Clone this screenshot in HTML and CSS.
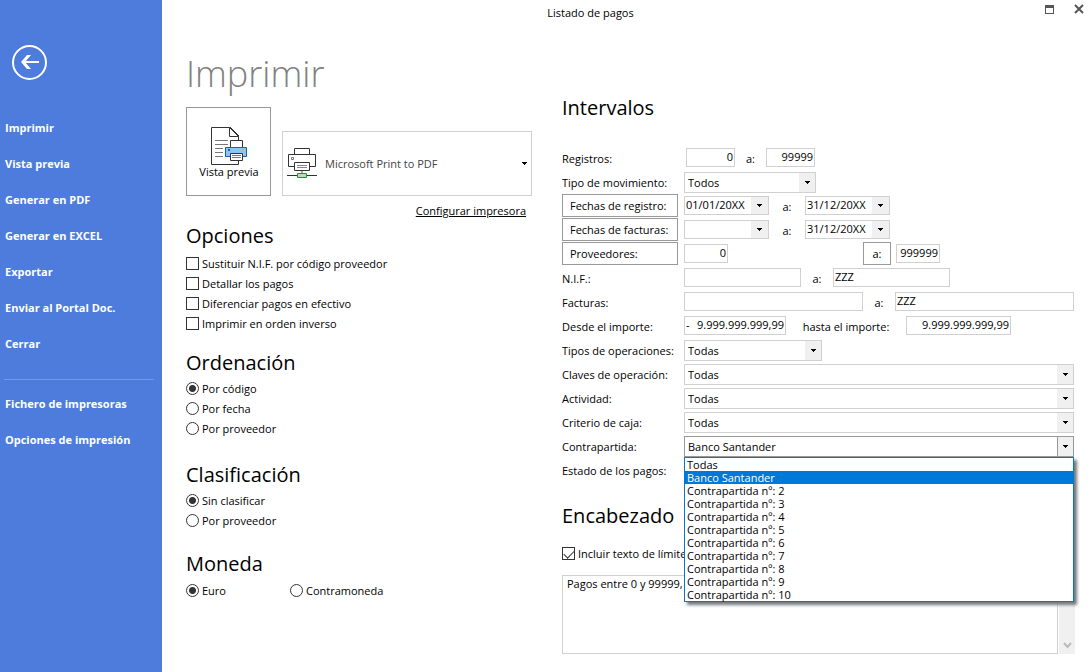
FILE: index.html
```html
<!DOCTYPE html>
<html lang="es">
<head>
<meta charset="utf-8">
<title>Listado de pagos</title>
<link rel="stylesheet" href="styles.css">
</head>
<body>
<svg class="defs" width="0" height="0" aria-hidden="true">
  <symbol id="arrow" viewBox="0 0 5 3"><path d="M0 0h5v1h-1v1h-1v1h-1v-1h-1v-1h-1z"/></symbol>
</svg>
<div class="app">
  <aside class="sidebar">
    <button class="back" type="button" aria-label="Volver">
      <svg width="35" height="35" viewBox="0 0 35 35" fill="none" stroke="#fff"><circle cx="17.500" cy="17.500" r="16.500" stroke-width="2"/><path d="M12 17h15" stroke-width="2"/><path d="M9 17l6-7h4l-6 7 6 7h-4z" fill="#fff" stroke="none"/></svg>
    </button>
    <nav class="menu">
      <a href="#">Imprimir</a>
      <a href="#">Vista previa</a>
      <a href="#">Generar en PDF</a>
      <a href="#">Generar en EXCEL</a>
      <a href="#">Exportar</a>
      <a href="#">Enviar al Portal Doc.</a>
      <a href="#">Cerrar</a>
    </nav>
    <hr class="divider">
    <nav class="menu">
      <a href="#">Fichero de impresoras</a>
      <a href="#">Opciones de impresión</a>
    </nav>
  </aside>

  <div class="main">
    <header class="titlebar">
      <span class="title">Listado de pagos</span>
      <div class="controls">
        <button type="button" aria-label="Maximizar"><svg width="9" height="10" viewBox="0 0 9 10"><path d="M0 1h9v9H0zM1 4v5h7V4z" fill="#555" fill-rule="evenodd"/></svg></button>
        <button type="button" aria-label="Cerrar"><svg width="10" height="10" viewBox="0 0 10 10"><path d="M1 1l8 8M9 1l-8 8" stroke="#555" stroke-width="2"/></svg></button>
      </div>
    </header>

    <div class="columns">
      <section class="left">
        <h1>Imprimir</h1>
        <div class="output">
          <button class="preview" type="button">
            <svg width="38" height="40" viewBox="0 0 38 40" fill="none">
              <path d="M28.500 14V10.500L19.500 1.500H1.500v37h27V35" fill="#fff" stroke="#333"/>
              <path d="M19.500 1.500v9h9M20 1l9 9" stroke="#333"/>
              <path d="M5 14.500h13M5 18.500h13M5 22.500h8M5 26.500h8M5 30.500h8" stroke="#777"/>
              <path d="M20.500 21.500v-7h12v7" fill="#fff" stroke="#333"/>
              <path d="M15.500 21.500h21v9h-21z" fill="#8ec5ef" stroke="#0f64b4"/>
              <path d="M18 23h2v2h-2z" fill="#0f64b4"/>
              <path d="M20.500 27.500h12v7h-12z" fill="#fff" stroke="#333"/>
              <path d="M22 29.500h9M22 31.500h9" stroke="#777"/>
            </svg>
            <span>Vista previa</span>
          </button>
          <button class="printer" type="button">
            <svg width="30" height="31" viewBox="0 0 30 31" fill="none">
              <path d="M7.500 6.500v-6h15v6" fill="#fff" stroke="#333"/>
              <path d="M7 18.500H1.500v-12h27v12H23" fill="#fff" stroke="#333"/>
              <path d="M4.500 9.500h2v2h-2z" stroke="#777"/>
              <path d="M7.500 14.500h15v8h-15z" fill="#fff" stroke="#333"/>
              <path d="M10 17.500h10M10 19.500h10" stroke="#888"/>
              <path d="M15 23v3" stroke="#aaa" stroke-width="2"/>
              <path d="M0 27.500h30" stroke="#333"/>
              <path d="M10.500 25.500h9v4h-9z" fill="#b5dfb8" stroke="#129a3c"/>
            </svg>
            <span>Microsoft Print to PDF</span>
            <svg class="tip" width="5" height="3"><use href="#arrow"/></svg>
          </button>
        </div>
        <a class="setup" href="#">Configurar impresora</a>

        <section class="group options">
          <h2>Opciones</h2>
          <label><input type="checkbox">Sustituir N.I.F. por código proveedor</label>
          <label><input type="checkbox">Detallar los pagos</label>
          <label><input type="checkbox">Diferenciar pagos en efectivo</label>
          <label><input type="checkbox">Imprimir en orden inverso</label>
        </section>
        <section class="group order">
          <h2>Ordenación</h2>
          <label><input type="radio" name="orden" checked>Por código</label>
          <label><input type="radio" name="orden">Por fecha</label>
          <label><input type="radio" name="orden">Por proveedor</label>
        </section>
        <section class="group sorting">
          <h2>Clasificación</h2>
          <label><input type="radio" name="clase" checked>Sin clasificar</label>
          <label><input type="radio" name="clase">Por proveedor</label>
        </section>
        <section class="group currency">
          <h2>Moneda</h2>
          <div class="pair">
            <label><input type="radio" name="moneda" checked>Euro</label>
            <label><input type="radio" name="moneda">Contramoneda</label>
          </div>
        </section>
      </section>

      <section class="right">
        <h2>Intervalos</h2>
        <div class="rows">
          <div class="row registers">
            <label class="name" for="reg1">Registros:</label>
            <input id="reg1" class="field num w49" value="0">
            <label class="to" for="reg2">a:</label>
            <input id="reg2" class="field num w49" value="99999">
          </div>
          <div class="row">
            <label class="name" for="tipo">Tipo de movimiento:</label>
            <span class="combo w132"><select id="tipo"><option>Todos</option></select><i><svg width="5" height="3"><use href="#arrow"/></svg></i></span>
          </div>
          <div class="row">
            <button class="name push" type="button">Fechas de registro:</button>
            <span class="date"><input id="fr1" aria-label="Fecha de registro desde" value="01/01/20XX"><button type="button" aria-label="Calendario"><svg width="5" height="3"><use href="#arrow"/></svg></button></span>
            <label class="to wide" for="fr2">a:</label>
            <span class="date"><input id="fr2" value="31/12/20XX"><button type="button" aria-label="Calendario"><svg width="5" height="3"><use href="#arrow"/></svg></button></span>
          </div>
          <div class="row">
            <button class="name push" type="button">Fechas de facturas:</button>
            <span class="date"><input id="ff1" aria-label="Fecha de factura desde"><button type="button" aria-label="Calendario"><svg width="5" height="3"><use href="#arrow"/></svg></button></span>
            <label class="to wide" for="ff2">a:</label>
            <span class="date"><input id="ff2" value="31/12/20XX"><button type="button" aria-label="Calendario"><svg width="5" height="3"><use href="#arrow"/></svg></button></span>
          </div>
          <div class="row">
            <button class="name push" type="button">Proveedores:</button>
            <input class="field num w44" aria-label="Proveedor desde" value="0">
            <button class="push until" type="button">a:</button>
            <input class="field num w44" aria-label="Proveedor hasta" value="999999">
          </div>
          <div class="row">
            <label class="name" for="nif1">N.I.F.:</label>
            <input id="nif1" class="field w117">
            <label class="to" for="nif2">a:</label>
            <input id="nif2" class="field w117" value="ZZZ">
          </div>
          <div class="row">
            <label class="name" for="fac1">Facturas:</label>
            <input id="fac1" class="field grow">
            <label class="to" for="fac2">a:</label>
            <input id="fac2" class="field grow" value="ZZZ">
          </div>
          <div class="row">
            <label class="name" for="imp1">Desde el importe:</label>
            <span class="field amount"><span>-</span><input id="imp1" value="9.999.999.999,99"></span>
            <label class="to amount-to" for="imp2">hasta el importe:</label>
            <input id="imp2" class="field num w105" value="9.999.999.999,99">
          </div>
          <div class="row">
            <label class="name" for="ops">Tipos de operaciones:</label>
            <span class="combo w138"><select id="ops"><option>Todas</option></select><i><svg width="5" height="3"><use href="#arrow"/></svg></i></span>
          </div>
          <div class="row">
            <label class="name" for="claves">Claves de operación:</label>
            <span class="combo grow"><select id="claves"><option>Todas</option></select><i><svg width="5" height="3"><use href="#arrow"/></svg></i></span>
          </div>
          <div class="row">
            <label class="name" for="act">Actividad:</label>
            <span class="combo grow"><select id="act"><option>Todas</option></select><i><svg width="5" height="3"><use href="#arrow"/></svg></i></span>
          </div>
          <div class="row">
            <label class="name" for="caja">Criterio de caja:</label>
            <span class="combo grow"><select id="caja"><option>Todas</option></select><i><svg width="5" height="3"><use href="#arrow"/></svg></i></span>
          </div>
          <div class="row">
            <label class="name" for="contra">Contrapartida:</label>
            <span class="combo grow open"><select id="contra"><option>Banco Santander</option></select><i><svg width="5" height="3"><use href="#arrow"/></svg></i>
              <ul class="list" role="listbox" aria-label="Contrapartida">
                <li role="option">Todas</li>
                <li role="option" aria-selected="true">Banco Santander</li>
                <li role="option">Contrapartida nº: 2</li>
                <li role="option">Contrapartida nº: 3</li>
                <li role="option">Contrapartida nº: 4</li>
                <li role="option">Contrapartida nº: 5</li>
                <li role="option">Contrapartida nº: 6</li>
                <li role="option">Contrapartida nº: 7</li>
                <li role="option">Contrapartida nº: 8</li>
                <li role="option">Contrapartida nº: 9</li>
                <li role="option">Contrapartida nº: 10</li>
              </ul>
            </span>
          </div>
          <div class="row">
            <label class="name" for="estado">Estado de los pagos:</label>
            <span class="combo w132"><select id="estado"></select></span>
          </div>
        </div>

        <h2 class="header-title">Encabezado</h2>
        <label class="limits"><input type="checkbox" checked>Incluir texto de límite</label>
        <div class="memo">
          <textarea aria-label="Texto de encabezado">Pagos entre 0 y 99999,</textarea>
          <div class="scroll"><svg width="9" height="7" viewBox="0 0 9 7"><path d="M1 1l3.500 4L8 1" fill="none" stroke="#bbb" stroke-width="2"/></svg></div>
        </div>
      </section>
    </div>
  </div>
</div>
</body>
</html>
```
FILE: styles.css
```css
* { box-sizing: border-box; }
body {
  margin: 0;
  background: #fff;
  color: #000;
  font: 11px/20px "Open Sans", "Noto Sans", sans-serif;
}
button, input, select, textarea {
  margin: 0;
  padding: 0;
  border: 0;
  border-radius: 0;
  background: none;
  color: inherit;
  font: inherit;
}
button svg, i svg { display: block; }
.defs { position: absolute; }
.app { display: flex; min-height: 100vh; }

.sidebar {
  flex: none;
  width: 162px;
  padding-top: 45px;
  background: #4e7cdd;
}
.back { display: block; margin: 0 0 30px 12px; }
.menu { display: flex; flex-direction: column; }
.menu a {
  padding-left: 5px;
  color: #fff;
  font-weight: 700;
  line-height: 36px;
  text-decoration: none;
}
.divider {
  height: 1px;
  margin: 17px 8px 6px 4px;
  border: 0;
  background: #7198ea;
}

.main { flex: 1; min-width: 0; }
.titlebar { display: flex; height: 26px; }
.title {
  flex: 1;
  line-height: 26px;
  text-align: center;
}
.controls {
  display: flex;
  justify-content: flex-end;
  align-items: flex-start;
  gap: 20px;
  width: 73px;
  padding: 4px 8px 0 0;
}

.columns { display: flex; gap: 30px; padding: 0 18px 18px 24px; }
.left { flex: none; width: 346px; }
h1, h2 { margin: 0; font-weight: 400; }
h1 {
  height: 81px;
  padding-top: 24px;
  color: #808080;
  font-size: 36px;
  font-weight: 300;
  line-height: 48px;
}
h2 { font-size: 20px; line-height: 28px; }
.output { display: flex; align-items: flex-end; gap: 11px; }
.preview {
  display: flex;
  flex-direction: column;
  align-items: center;
  width: 85px;
  height: 89px;
  padding: 18px 0 0 1px;
  border: 1px solid #999;
}
.preview span { line-height: 12px; }
.printer {
  display: flex;
  flex: 1;
  align-items: center;
  height: 65px;
  padding: 0 4px;
  border: 1px solid #d0d0d0;
  color: #444;
}
.printer span { flex: 1; margin-left: 8px; text-align: left; }
.setup {
  display: block;
  padding: 5px 6px 5px 0;
  color: #000;
  text-align: right;
}
.group label, .limits { display: flex; align-items: center; gap: 3px; height: 20px; }
.options h2 { margin: -4px 0 4px; }
.order { margin-top: 15px; }
.sorting { margin-top: 22px; }
.currency { margin-top: 19px; }
.order h2, .sorting h2 { margin-bottom: 2px; }
.currency h2 { margin-bottom: 3px; }
.pair { display: grid; grid-template-columns: 104px 1fr; }

input[type="checkbox"], input[type="radio"] {
  appearance: none;
  flex: none;
  width: 13px;
  height: 13px;
  margin-bottom: 1px;
  border: 1px solid #333;
}
input[type="radio"] { border-radius: 50%; }
input[type="radio"]:checked { background: radial-gradient(circle, #333 3px, #fff 4px); }
input[type="checkbox"]:checked::before {
  content: "";
  display: block;
  width: 9px;
  height: 5px;
  margin: 2px 0 0 1px;
  border: solid #333;
  border-width: 0 0 1px 1px;
  transform: rotate(-45deg);
}

.right { flex: 1; min-width: 0; padding-top: 68px; }
.rows { padding-top: 24px; }
.row { display: flex; align-items: flex-start; height: 24px; line-height: 25px; }
.name { flex: none; width: 122px; white-space: nowrap; }
.push {
  height: 23px;
  border: 1px solid #999;
  line-height: 21px;
}
.name.push { width: 116px; margin-right: 6px; padding-left: 7px; text-align: left; }
.until { width: 28px; margin: 0 5px 0 135px; }
.field, .date {
  height: 19px;
  margin-top: 2px;
  padding: 0 1px 2px;
  border: 1px solid #d0d0d0;
  line-height: 15px;
}
.registers .name { width: 124px; }
.registers .to { width: 31px; }
.num { text-align: right; }
.grow { flex: 1; min-width: 0; }
.w44 { width: 44px; }
.w49 { width: 49px; }
.w105 { width: 105px; }
.w117 { width: 117px; }
.w132 { width: 132px; }
.w138 { width: 138px; }
.to { flex: none; width: 32px; text-align: center; }
.to.wide { width: 36px; }
.to.amount-to { width: 120px; }
.amount { display: flex; width: 102px; }
.amount input { flex: 1; min-width: 0; text-align: right; }
.date { display: flex; width: 85px; padding: 0 0 0 1px; }
.date input { flex: 1; min-width: 0; padding-bottom: 2px; }
.date button, .combo i {
  display: grid;
  place-items: center;
  width: 17px;
  background: #f0f0f0;
}
.combo {
  position: relative;
  display: flex;
  height: 21px;
  margin-top: 2px;
  border: 1px solid #d0d0d0;
}
.combo select {
  appearance: none;
  flex: 1;
  min-width: 0;
  padding-left: 3px;
  line-height: 19px;
}
.combo i { flex: none; width: 16px; }
.combo.open { border-color: #999; }
.combo.open i { border-left: 1px solid #999; }
.list {
  position: absolute;
  z-index: 1;
  top: 20px;
  right: -1px;
  left: -1px;
  margin: 0;
  padding: 0;
  border: 1px solid #0078d7;
  background: #fff;
  box-shadow: 3px 3px 3px #777;
  line-height: 13px;
  list-style: none;
}
.list li { padding-left: 2px; }
.list [aria-selected] { background: #0078d7; color: #fff; }

.header-title { margin-top: 20px; }
.limits { margin-top: 14px; }
.memo { display: flex; gap: 1px; height: 79px; margin: 11px -1px 0 0; }
.memo textarea {
  flex: 1;
  min-width: 0;
  padding: 0 4px;
  border: 1px solid #d0d0d0;
  line-height: 16px;
  resize: none;
}
.scroll {
  display: flex;
  align-items: flex-end;
  justify-content: center;
  width: 16px;
  padding-bottom: 5px;
  background: #f0f0f0;
}
.scroll svg { display: block; }
```
